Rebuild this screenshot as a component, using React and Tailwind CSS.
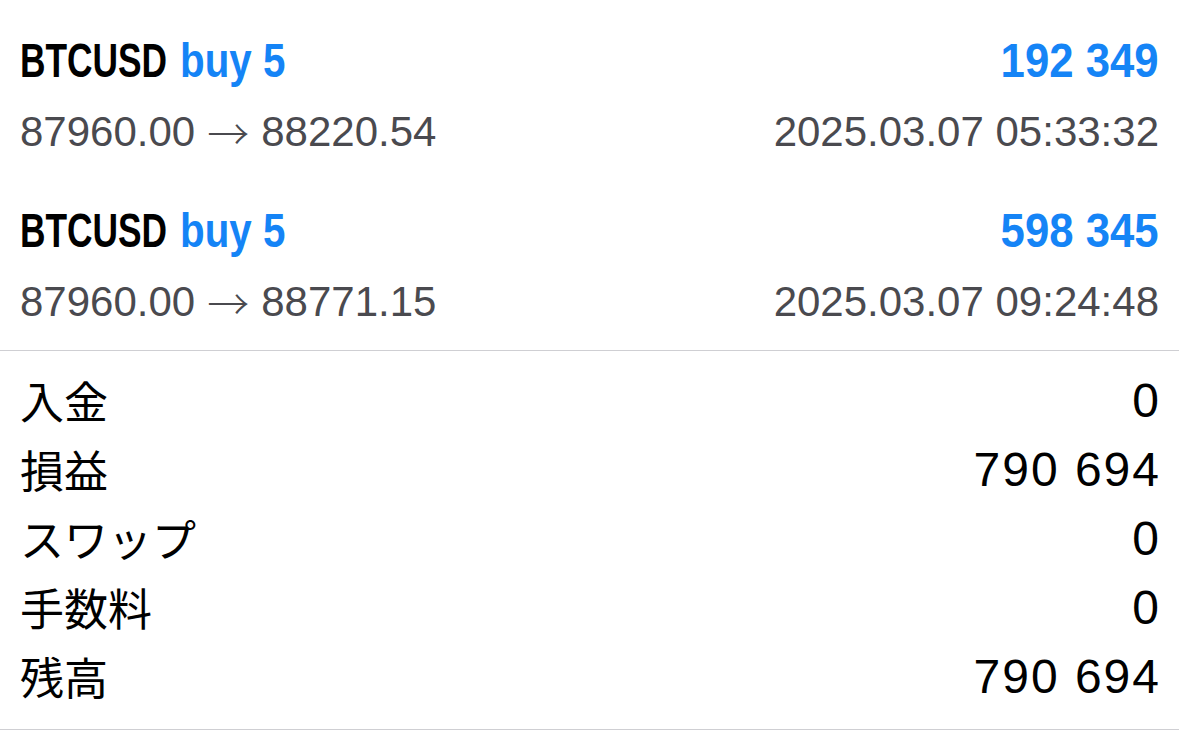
export default function App() {
  const trades = [
    { sym: "BTCUSD", side: "buy 5", profit: "192 349", from: "87960.00", to: "88220.54", time: "2025.03.07 05:33:32" },
    { sym: "BTCUSD", side: "buy 5", profit: "598 345", from: "87960.00", to: "88771.15", time: "2025.03.07 09:24:48" },
  ];
  const summary = [
    ["入金", "0"],
    ["損益", "790 694"],
    ["スワップ", "0"],
    ["手数料", "0"],
    ["残高", "790 694"],
  ];
  const bold = { fontFamily: '"Liberation Sans", Arial, sans-serif' };
  const reg = { fontFamily: '"Liberation Sans", Arial, sans-serif' };
  const cjk = { fontFamily: '"Noto Sans CJK JP", sans-serif' };
  return (
    <div className="w-[1179px] h-[730px] bg-white overflow-hidden">
      <div className="pt-[28px]">
        {trades.map((t, i) => (
          <div key={i} className={i === 0 ? "h-[142px] mb-[28px]" : "h-[142px] mb-[10px]"}>
            <div className="flex justify-between items-center h-[66px] mb-[3px] px-[20px] font-bold text-[48px] leading-none" style={bold}>
              <div className="flex items-center">
                <span className="inline-block w-[147px] whitespace-nowrap">
                  <span className="inline-block origin-left scale-x-[0.735] text-black">{t.sym}</span>
                </span>
                <span className="inline-block w-[13px]" />
                <span className="inline-block origin-left scale-x-[0.84] text-[#1584f6] whitespace-nowrap">{t.side}</span>
              </div>
              <div className="inline-block origin-right scale-x-[0.91] text-[#1584f6] whitespace-nowrap">{t.profit}</div>
            </div>
            <div className="flex justify-between items-center h-[69px] px-[20px] text-[42px] leading-none text-[#4a4a4f]" style={reg}>
              <div className="flex items-center whitespace-nowrap">
                <span>{t.from}</span>
                <span className="inline-block w-[12px]" />
                <span className="text-[42px] leading-none font-light" style={cjk}>→</span>
                <span className="inline-block w-[12px]" />
                <span>{t.to}</span>
              </div>
              <div>{t.time}</div>
            </div>
          </div>
        ))}
      </div>
      <div className="border-t border-b border-[#cfcfd3] pt-[14px] pb-[19px]">
        {summary.map(([k, v]) => (
          <div key={k} className="flex justify-between items-center h-[69px] px-[20px] leading-none text-black">
            <div className="text-[44px]" style={cjk}>{k}</div>
            <div className="text-[48px] tracking-[2px] mr-[-2px] mt-[2px]" style={reg}>{v}</div>
          </div>
        ))}
      </div>
    </div>
  );
}
